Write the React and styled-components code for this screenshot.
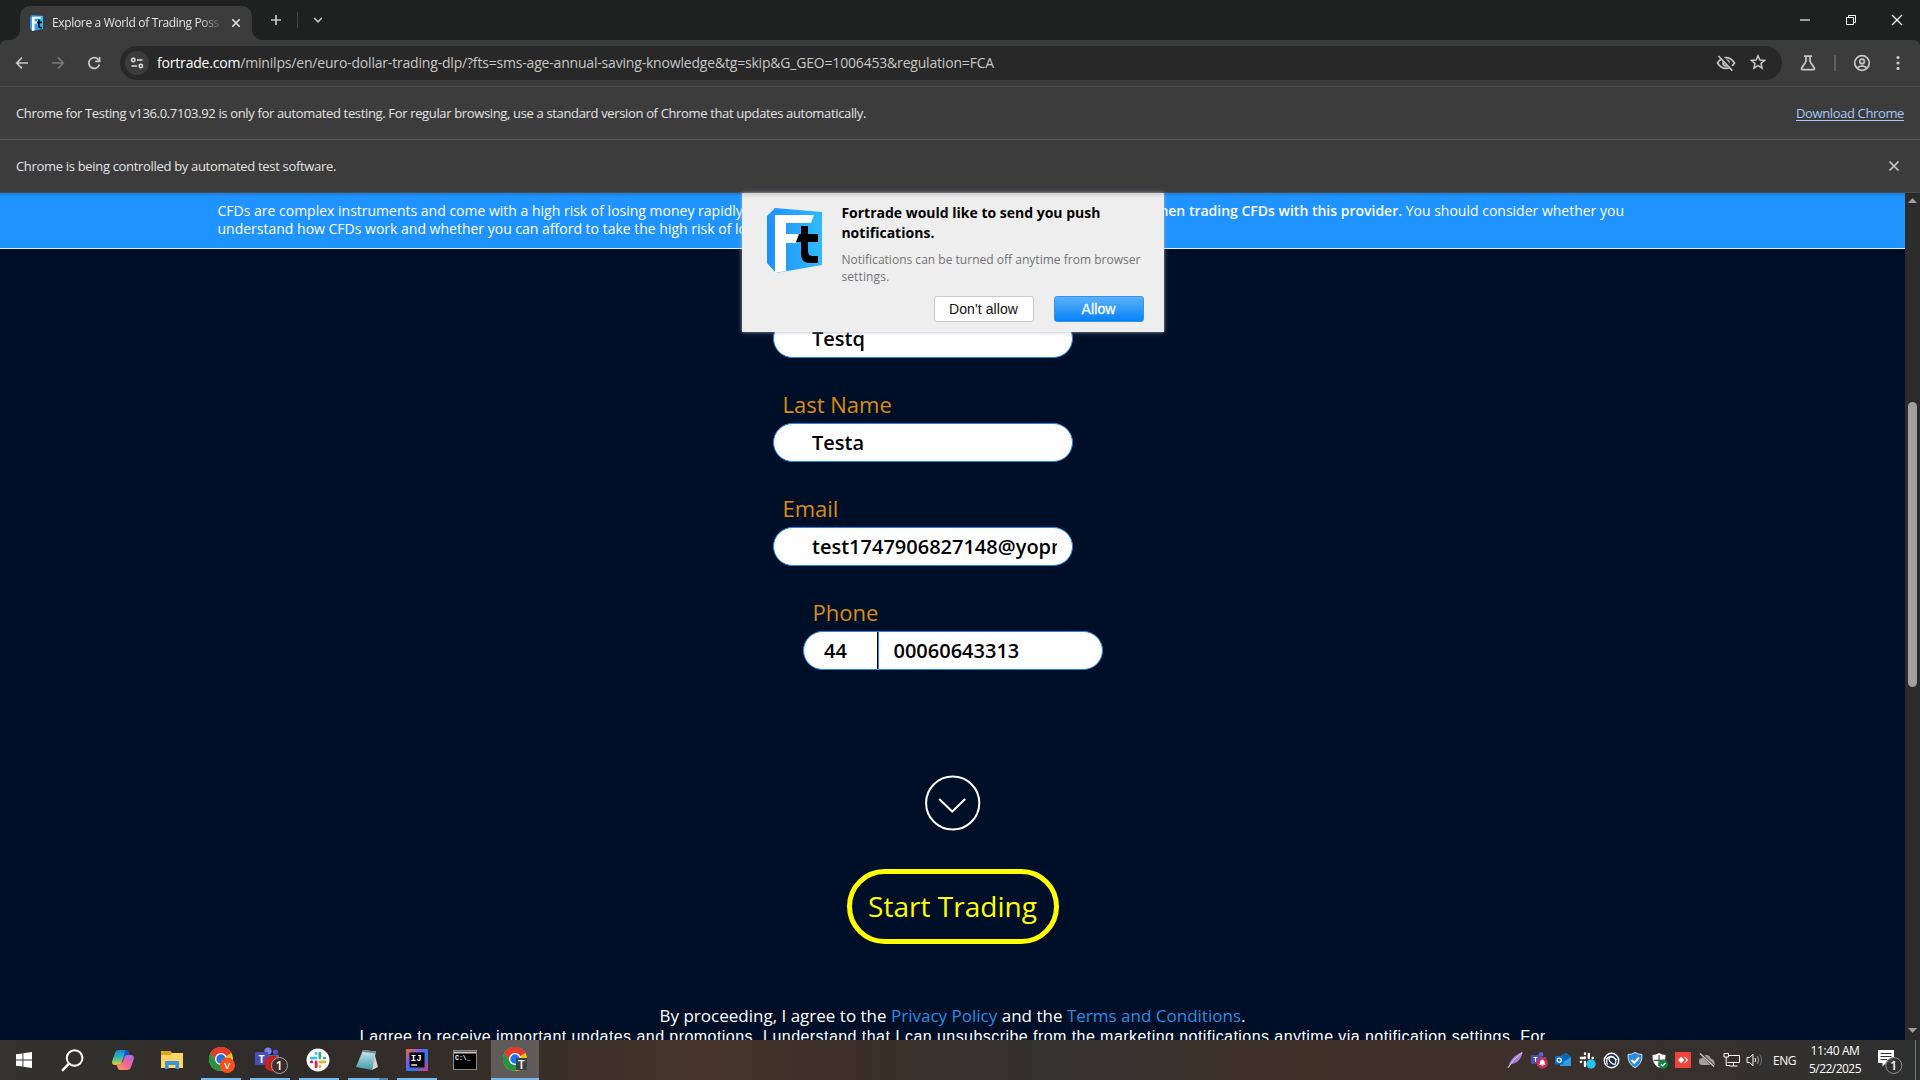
import React, { useLayoutEffect, useRef, useState } from "react";
import styled, { createGlobalStyle } from "styled-components";

const UI = `"Open Sans", "Noto Sans", sans-serif`;
const ARIAL = `"Liberation Sans", Arial, sans-serif`;

const Global = createGlobalStyle`
  *, *::before, *::after { box-sizing: border-box; }
  html, body { margin: 0; padding: 0; overflow: hidden; background: #000f28; }
  svg { display: block; flex: none; }
`;

/* ---------- text run tracked to a given measure ---------- */
const Run = styled.span`
  display: inline-block;
  white-space: pre;
  flex: none;
  text-decoration: inherit;
  text-underline-offset: inherit;
`;
function Tracked({ width, children }) {
  const ref = useRef(null);
  const [spacing, setSpacing] = useState(0);
  useLayoutEffect(() => {
    const el = ref.current;
    el.style.letterSpacing = "0px";
    const natural = el.getBoundingClientRect().width;
    setSpacing((width - natural) / el.textContent.length);
    el.style.letterSpacing = (width - natural) / el.textContent.length + "px";
  }, [width]);
  return <Run ref={ref} style={{ letterSpacing: spacing }}>{children}</Run>;
}

const Screen = styled.div`
  width: 1920px;
  height: 1080px;
  display: flex;
  flex-direction: column;
  overflow: hidden;
  font-family: ${UI};
`;

/* ---------- tab strip ---------- */
const TabStrip = styled.div`
  height: 40px;
  flex: none;
  display: flex;
  background: #1f2120;
  padding-left: 20px;
`;
const Tab = styled.div`
  position: relative;
  width: 232px;
  height: 34px;
  margin-top: 6px;
  padding: 0 10px;
  display: flex;
  align-items: center;
  background: #3c3c3c;
  border-radius: 10px 10px 0 0;
  color: #e3e3e3;
  font-size: 12px;
  &::before, &::after {
    content: "";
    position: absolute;
    bottom: 0;
    width: 10px;
    height: 10px;
  }
  &::before { left: -10px; background: radial-gradient(circle at 0 0, transparent 9.5px, #3c3c3c 10px); }
  &::after { right: -10px; background: radial-gradient(circle at 100% 0, transparent 9.5px, #3c3c3c 10px); }
`;
const TabTitle = styled.div`
  width: 168px;
  margin: 0 10px 0 9px;
  height: 18px;
  line-height: 17px;
  mask-image: linear-gradient(90deg, #000 147px, rgba(0, 0, 0, 0.15) 168px);
`;
const StripTools = styled.div`
  display: flex;
  align-items: center;
  padding-left: 18px;
  gap: 15px;
`;
const Divider = styled.span`
  width: ${(p) => p.$w || 1}px;
  height: ${(p) => p.$h || 16}px;
  margin-right: ${(p) => p.$right || 0}px;
  background: ${(p) => p.$c || "#474847"};
`;
const WindowButtons = styled.div`
  margin-left: auto;
  display: flex;
  align-items: center;
  gap: 30px;
  padding-right: 15px;
`;

/* ---------- toolbar ---------- */
const Toolbar = styled.div`
  height: 47px;
  flex: none;
  display: flex;
  align-items: center;
  background: #3c3c3c;
  border-bottom: 1px solid #4a4a4a;
  border-radius: 6px 6px 0 0;
  padding: 0 14px 0 13px;
`;
const ToolbarWrap = styled.div`
  background: #1f2120;
  flex: none;
`;
const NavButtons = styled.div`
  display: flex;
  gap: 18px;
  width: 107px;
`;
const Omnibox = styled.div`
  width: 1662px;
  height: 34px;
  border-radius: 17px;
  background: #282828;
  display: flex;
  align-items: center;
  padding: 0 16px 0 5px;
`;
const SiteChip = styled.span`
  width: 24px;
  height: 24px;
  border-radius: 50%;
  background: #3c3c3c;
  display: grid;
  place-items: center;
`;
const Url = styled.div`
  margin-left: 8px;
  flex: 1;
  font-size: 14px;
  line-height: 20px;
  color: #c7c7c7;
  b { color: #fff; font-weight: 400; }
`;
const OmniActions = styled.div`
  display: flex;
  gap: 14px;
`;
const ToolActions = styled.div`
  flex: 1;
  display: flex;
  align-items: center;
  gap: 17px;
  padding-left: 17px;
  svg:last-child { margin-left: 2px; }
`;

/* ---------- infobars ---------- */
const InfoBar = styled.div`
  height: 53px;
  flex: none;
  display: flex;
  align-items: center;
  justify-content: space-between;
  background: #3c3c3c;
  border-bottom: 1px solid ${(p) => p.$line};
  padding: 0 ${(p) => p.$right}px 0 16px;
  font-size: 13px;
  line-height: 18px;
  color: #e3e3e3;
`;
const BarLink = styled.a`
  color: #a8c7fa;
  text-decoration: underline;
  text-underline-offset: 2px;
`;

/* ---------- web page ---------- */
const Viewport = styled.div`
  position: relative;
  height: 847px;
  flex: none;
  display: flex;
`;
const Page = styled.div`
  width: 1905px;
  height: 847px;
  background: #000f28;
  overflow: hidden;
  display: flex;
  flex-direction: column;
`;
const RiskBanner = styled.div`
  height: 56px;
  flex: none;
  background: linear-gradient(#1a7cd8 0, #1e8ff8 3px, #1f93ff 6px);
  border-bottom: 1px solid #e8f3ff;
  padding: 9px 0 0 217.5px;
  color: #fff;
  font-size: 14px;
  line-height: 18px;
`;
const RiskLine = styled.div`
  width: 1406.5px;
  height: 18px;
  display: flex;
  justify-content: space-between;
  white-space: nowrap;
  b { font-weight: 600; }
`;
const Form = styled.div`
  width: 330px;
  margin: 5px 0 0 773px;
  display: flex;
  flex-direction: column;
  flex: none;
`;
const Field = styled.div`
  height: 104px;
  width: 300px;
  margin-left: ${(p) => (p.$shift ? 30 : 0)}px;
  padding-top: 27px;
`;
const Label = styled.label`
  display: block;
  padding-left: 9.5px;
  height: 38px;
  line-height: 38px;
  font-size: 22px;
  color: #db8c10;
`;
const Box = styled.div`
  height: 39px;
  border: 1px solid #1f87ea;
  border-radius: 20px;
  background: #fff;
  padding-left: ${(p) => (p.$split ? 20 : 38)}px;
  padding-right: 15px;
  display: flex;
  align-items: center;
  overflow: hidden;
  font-size: 20px;
  font-weight: 600;
  color: #000;
`;
const Value = styled.div`
  line-height: 36px;
  overflow: hidden;
  white-space: nowrap;
  width: ${(p) => (p.$w ? p.$w + "px" : "auto")};
`;
const BoxSplit = styled.span`
  width: 2px;
  height: 39px;
  margin-right: 14.5px;
  background: linear-gradient(90deg, #000 50%, #1f87ea 50%);
`;
const Centered = styled.div`
  display: flex;
  flex-direction: column;
  align-items: center;
  padding-top: 105px;
  color: #fff;
`;
const StartButton = styled.button`
  width: 212px;
  height: 75px;
  margin-top: 38px;
  padding: 0 0 2px;
  border: 5px solid #ffff00;
  border-radius: 38px;
  background: transparent;
  color: #ffff00;
  font-family: ${UI};
  font-size: 28px;
`;
const Consent = styled.p`
  margin: 61px 0 0;
  height: 22px;
  line-height: 22px;
  font-size: 17px;
  a { color: #2b8de0; }
`;
const Updates = styled.p`
  margin: 0;
  line-height: 20px;
  font-family: ${ARIAL};
  font-size: 16px;
`;

const Scrollbar = styled.div`
  width: 15px;
  background: #2b2b2b;
  display: flex;
  flex-direction: column;
  align-items: center;
  padding: 5px 0 7px;
`;
const Thumb = styled.span`
  width: 9px;
  height: 285px;
  margin: 199px 0 auto;
  border-radius: 5px;
  background: #9f9f9f;
`;

/* ---------- push dialog ---------- */
const PushDialog = styled.div`
  position: absolute;
  left: 742px;
  top: 0;
  width: 422px;
  height: 139px;
  background: linear-gradient(#d2d2d2 0, #eeeeee 5px);
  box-shadow: 0 0 4px rgba(160, 170, 190, 0.9);
  padding: 10px 20px 0 25px;
  display: grid;
  grid-template-columns: 74.4px 1fr;
  grid-template-rows: 93px 26px;
`;
const LogoCell = styled.div`
  padding-top: 5px;
`;
const PushTitle = styled.div`
  font-size: 14px;
  font-weight: 700;
  line-height: 20px;
  color: #000;
`;
const PushNote = styled.div`
  margin-top: 8px;
  font-size: 12px;
  line-height: 17px;
  color: #737373;
`;
const PushActions = styled.div`
  grid-column: 1 / 3;
  display: flex;
  justify-content: flex-end;
  gap: 20px;
`;
const PushButton = styled.button`
  width: ${(p) => (p.$primary ? 90 : 100)}px;
  height: 26px;
  padding: 0 1px 0 0;
  border-radius: 3px;
  border: 1px solid ${(p) => (p.$primary ? "#2f96f0" : "#c8c8c8")};
  background: ${(p) => (p.$primary ? "linear-gradient(#5cb0f8, #0682fa)" : "#fff")};
  color: ${(p) => (p.$primary ? "#fff" : "#111")};
  -webkit-text-stroke: ${(p) => (p.$primary ? "0.3px #fff" : "0")};
  font-family: ${ARIAL};
  font-size: 14px;
`;

/* ---------- taskbar ---------- */
const Taskbar = styled.div`
  height: 40px;
  flex: none;
  display: flex;
  background: linear-gradient(90deg, #33322f 0, #2f2b28 300px, #3a2f28 560px, #46342a 700px, #3b2f28 850px, #33322e 1050px, #3f3028 1300px, #3d302a 1500px, #33312f 1750px, #2e302f 1920px);
  color: #fff;
`;
const Slot = styled.div`
  width: ${(p) => p.$w || 48}px;
  padding-right: ${(p) => p.$trim || 0}px;
  display: grid;
  place-items: center;
`;
const AppSlot = styled.div`
  width: 49px;
  height: 40px;
  display: grid;
  place-items: center;
  grid-template-rows: 36px 2px;
  padding: 2px ${(p) => p.$trim || 0}px 0 0;
  background: ${(p) => (p.$active ? "linear-gradient(#5f5b59, #5f5b59) 0 0 / 48px 40px no-repeat" : "none")};
  &::after {
    content: "";
    justify-self: start;
    margin-left: ${(p) => (p.$active ? 0 : 4)}px;
    width: ${(p) => (p.$active ? 48 : 40)}px;
    height: 2px;
    background: ${(p) => (p.$idle ? "transparent" : p.$multi ? "linear-gradient(90deg, #76b9ed 31px, #5487ad 31px)" : "#76b9ed")};
  }
`;
const Tray = styled.div`
  margin-left: auto;
  display: flex;
  align-items: center;
`;
const TrayIcons = styled.div`
  display: grid;
  grid-template-columns: repeat(11, 24px);
  place-items: center;
`;
const Lang = styled.div`
  width: 35px;
  padding-left: 6px;
  font-size: 12px;
`;
const Clock = styled.div`
  width: 58px;
  margin-left: 4px;
  font-size: 12px;
  line-height: 18px;
  text-align: center;
`;
const Notice = styled.div`
  margin: 0 12px 0 13px;
  width: 26px;
`;

const LINE = { fill: "none", stroke: "#c7c7c7", strokeWidth: 1.7 };

function FtLogo({ w, h }) {
  return (
    <svg width={w} height={h} viewBox="0 0 55 65" preserveAspectRatio="none">
      <defs>
        <linearGradient id="ft" x1="0" x2="1">
          <stop offset="0" stopColor="#1f8fff" />
          <stop offset="1" stopColor="#31bbff" />
        </linearGradient>
      </defs>
      <path d="M8 0L55 4V57L9 65L0 55V8Z" fill="url(#ft)" />
      <path d="M8 7H47L44 15H19V26H33L29 35H19V63L8 65Z" fill="#fff" />
      <path d="M34 18H41V26H51V34H41V43Q41 48 45 48H51V55H43Q34 55 34 46V34H29L32 26H34Z" fill="#000" />
    </svg>
  );
}

function Chrome({ badge }) {
  return (
    <svg width="26" height="26" viewBox="0 0 26 26">
      <circle cx="12" cy="12" r="12" fill="#fbc116" />
      <path d="M12 12L1.6 6A12 12 0 0 1 22.4 6Z" fill="#e33b2e" />
      <path d="M12 6H22.4A12 12 0 0 0 1.6 6L6.8 15Z" fill="#e33b2e" />
      <path d="M6.8 15L1.6 6A12 12 0 0 0 12 24L17.2 15L12 18Z" fill="#229342" />
      <circle cx="12" cy="12" r="6" fill="#fff" />
      <circle cx="12" cy="12" r="4.7" fill="#1a73e8" />
      {badge === "V" && <circle cx="18.3" cy="18.3" r="7.7" fill="#f4511e" />}
      {badge === "T" && <rect x="13" y="11" width="11" height="12" fill="#3d4144" />}
      <text x="18.3" y={badge === "V" ? 22 : 21.5} fontFamily={UI} fontSize={badge === "V" ? 9.5 : 12} fontWeight="600" fill="#fff" textAnchor="middle">{badge}</text>
    </svg>
  );
}

function Teams() {
  return (
    <svg width="36" height="28" viewBox="0 0 36 28">
      <circle cx="16" cy="5" r="3.6" fill="#7b83eb" />
      <circle cx="23.5" cy="6" r="2.6" fill="#5059c9" />
      <path d="M12 9H27V16Q26 21 20 22Q12 21 12 15Z" fill="#5b62cf" />
      <rect x="3" y="6" width="13" height="13" rx="1.2" fill="#464eb8" />
      <text x="9.5" y="16.5" fontFamily={UI} fontSize="10.5" fontWeight="700" fill="#fff" textAnchor="middle">T</text>
      <circle cx="20.5" cy="17.5" r="8" fill="#c4221f" />
      <circle cx="27.5" cy="19.5" r="8" fill="#33302d" fillOpacity=".85" stroke="#a7a4a2" />
      <text x="27.3" y="24" fontFamily={UI} fontSize="12" fontWeight="600" fill="#fff" textAnchor="middle">1</text>
    </svg>
  );
}

function SlackMark() {
  return (
    <g strokeWidth="2.7" strokeLinecap="round" fill="none">
      <path d="M9.7 5V5.6M5 9.7H9.6" stroke="#36c5f0" />
      <path d="M13.3 5V9.6M17.6 9.7H18" stroke="#2eb67d" />
      <path d="M13.4 13.3H18M13.3 17.6V18" stroke="#ecb22e" />
      <path d="M9.7 13.4V18M5 13.3H5.6" stroke="#e01e5a" />
    </g>
  );
}

function BrowserChrome() {
  return (
    <>
      <TabStrip>
        <Tab>
          <FtLogo w={13} h={16} />
          <TabTitle><Tracked width={167}>Explore a World of Trading Poss</Tracked></TabTitle>
          <svg width="14" height="14" viewBox="0 0 14 14"><path d="M3.3 3.3L10.7 10.7M10.7 3.3L3.3 10.7" fill="none" stroke="#e3e3e3" strokeWidth="1.6" /></svg>
        </Tab>
        <StripTools>
          <svg width="12" height="12" viewBox="0 0 12 12"><path d="M6 1V11M1 6H11" {...LINE} /></svg>
          <Divider />
          <svg width="10" height="10" viewBox="0 0 10 10"><path d="M1.2 3L5 6.8L8.8 3" {...LINE} /></svg>
        </StripTools>
        <WindowButtons>
          <svg width="16" height="16" viewBox="0 0 16 16"><path d="M3 8H13" stroke="#a0a0a0" strokeWidth="2" /></svg>
          <svg width="16" height="16" viewBox="0 0 16 16"><path d="M3.5 5.5H10.5V12.5H3.5ZM5.5 5.5V3.5H12.5V10.5H10.5" fill="none" stroke="#fff" /></svg>
          <svg width="16" height="16" viewBox="0 0 16 16"><path d="M3 3L13 13M13 3L3 13" stroke="#fff" strokeWidth="1.2" /></svg>
        </WindowButtons>
      </TabStrip>
      <ToolbarWrap>
        <Toolbar>
          <NavButtons>
            <svg width="18" height="18" viewBox="0 0 18 18"><path d="M15 9H4M9 3.7L3.7 9L9 14.3" {...LINE} /></svg>
            <svg width="18" height="18" viewBox="0 0 18 18"><path d="M3 9H14M9 3.7L14.3 9L9 14.3" {...LINE} stroke="#777" /></svg>
            <svg width="18" height="18" viewBox="0 0 18 18"><path d="M14.4 10.5A5.4 5.4 0 1 1 13.2 5.4L14.5 6.9" {...LINE} /><path d="M14.6 3V7.3H10.2" {...LINE} /></svg>
          </NavButtons>
          <Omnibox>
            <SiteChip>
              <svg width="14" height="14" viewBox="0 0 14 14" fill="none" stroke="#e3e3e3" strokeWidth="1.5">
                <circle cx="3.3" cy="4" r="1.7" /><path d="M7 4H12.5" /><circle cx="10.8" cy="10" r="1.7" /><path d="M1.5 10H7" />
              </svg>
            </SiteChip>
            <Url><Tracked width={837}><b>fortrade.com</b>/minilps/en/euro-dollar-trading-dlp/?fts=sms-age-annual-saving-knowledge&amp;tg=skip&amp;G_GEO=1006453&amp;regulation=FCA</Tracked></Url>
            <OmniActions>
              <svg width="20" height="18" viewBox="0 0 20 18"><path d="M1.5 9Q5 3.6 10 3.6T18.5 9Q15 14.4 10 14.4T1.5 9Z" {...LINE} /><circle cx="10" cy="9" r="3" {...LINE} /><path d="M3.4 1L17 15.8" stroke="#282828" strokeWidth="4" /><path d="M2.5 2L16.3 16.6" {...LINE} /></svg>
              <svg width="16" height="16" viewBox="0 0 16 16"><path d="M8 1.7L9.9 6L14.6 6.4L11 9.5L12.1 14.1L8 11.6L3.9 14.1L5 9.5L1.4 6.4L6.1 6Z" {...LINE} strokeWidth="1.5" /></svg>
            </OmniActions>
          </Omnibox>
          <ToolActions>
            <svg width="18" height="18" viewBox="0 0 18 18"><path d="M5 2.2H13M7 2.2V7.5L2.6 14.2Q2.2 15.6 3.5 15.6H14.5Q15.8 15.6 15.4 14.2L11 7.5V2.2" {...LINE} /></svg>
            <Divider $w={2} $c="#5e5e5e" />
            <svg width="18" height="18" viewBox="0 0 18 18"><circle cx="9" cy="9" r="7.3" {...LINE} /><circle cx="9" cy="7.4" r="2.3" {...LINE} /><path d="M4 14.2Q9 9.7 14 14.2" {...LINE} /></svg>
            <svg width="16" height="16" viewBox="0 0 16 16" fill="#c7c7c7"><circle cx="8" cy="2.6" r="1.6" /><circle cx="8" cy="8" r="1.6" /><circle cx="8" cy="13.4" r="1.6" /></svg>
          </ToolActions>
        </Toolbar>
      </ToolbarWrap>
      <InfoBar $line="#5e5e5e" $right={16}>
        <Tracked width={850}>Chrome for Testing v136.0.7103.92 is only for automated testing. For regular browsing, use a standard version of Chrome that updates automatically.</Tracked>
        <BarLink><Tracked width={108}>Download Chrome</Tracked></BarLink>
      </InfoBar>
      <InfoBar $line="#4c4c4c" $right={19}>
        <Tracked width={320}>Chrome is being controlled by automated test software.</Tracked>
        <svg width="14" height="14" viewBox="0 0 14 14"><path d="M2.5 2.5L11.5 11.5M11.5 2.5L2.5 11.5" {...LINE} /></svg>
      </InfoBar>
    </>
  );
}

function WebPage() {
  return (
    <Viewport>
      <Page>
        <RiskBanner>
          <RiskLine>
            <span>CFDs are complex instruments and come with a high risk of losing money rapidly due to leverage.</span>
            <span><b>79% of retail investor accounts lose money when trading CFDs with this provider.</b> You should consider whether you</span>
          </RiskLine>
          <RiskLine>understand how CFDs work and whether you can afford to take the high risk of losing your money.</RiskLine>
        </RiskBanner>
        <Form>
          <Field><Label>First Name</Label><Box><Value>Testq</Value></Box></Field>
          <Field><Label>Last Name</Label><Box><Value>Testa</Value></Box></Field>
          <Field><Label>Email</Label><Box><Value $w={245}>test1747906827148@yopmail.com</Value></Box></Field>
          <Field $shift><Label>Phone</Label><Box $split><Value $w={53}>44</Value><BoxSplit /><Value>00060643313</Value></Box></Field>
        </Form>
        <Centered>
          <svg width="56" height="56" viewBox="0 0 56 56">
            <circle cx="27.7" cy="28" r="26.6" fill="none" stroke="#fff" strokeWidth="2" />
            <path d="M14.2 24L27.2 36.5L40.2 24" fill="none" stroke="#fff" strokeWidth="2" />
          </svg>
          <StartButton><Tracked width={169}>Start Trading</Tracked></StartButton>
          <Consent><Tracked width={586}>By proceeding, I agree to the <a>Privacy Policy</a> and the <a>Terms and Conditions</a>.</Tracked></Consent>
          <Updates><Tracked width={1186}>I agree to receive important updates and promotions. I understand that I can unsubscribe from the marketing notifications anytime via notification settings. For</Tracked></Updates>
        </Centered>
      </Page>
      <Scrollbar>
        <svg width="9" height="5" viewBox="0 0 9 5"><path d="M4.5 0L9 5H0Z" fill="#9f9f9f" /></svg>
        <Thumb />
        <svg width="9" height="5" viewBox="0 0 9 5"><path d="M4.5 5L9 0H0Z" fill="#9f9f9f" /></svg>
      </Scrollbar>
      <PushDialog>
        <LogoCell><FtLogo w={55} h={65} /></LogoCell>
        <div>
          <PushTitle><Tracked width={259}>Fortrade would like to send you push</Tracked><br /><Tracked width={93}>notifications.</Tracked></PushTitle>
          <PushNote><Tracked width={299}>Notifications can be turned off anytime from browser</Tracked><br /><Tracked width={48}>settings.</Tracked></PushNote>
        </div>
        <PushActions>
          <PushButton><Tracked width={69}>Don't allow</Tracked></PushButton>
          <PushButton $primary><Tracked width={34}>Allow</Tracked></PushButton>
        </PushActions>
      </PushDialog>
    </Viewport>
  );
}

function SystemBar() {
  return (
    <Taskbar>
      <Slot>
        <svg width="16" height="16" viewBox="0 0 16 16" fill="#fff"><path d="M0 2.3L6.5 1.4V7.6H0ZM7.4 1.2L16 0V7.6H7.4ZM0 8.4H6.5V14.6L0 13.7ZM7.4 8.4H16V16L7.4 14.8Z" /></svg>
      </Slot>
      <Slot>
        <svg width="23" height="23" viewBox="0 0 23 23" fill="none" stroke="#fff" strokeWidth="2"><circle cx="13.6" cy="9" r="7.8" /><path d="M8 14.7L1 21.8" strokeWidth="2.4" /></svg>
      </Slot>
      <Slot $w={53}>
        <svg width="22" height="20" viewBox="0 0 22 20">
          <defs>
            <linearGradient id="cpA" x1="0" y1="0" x2="0" y2="1"><stop offset="0" stopColor="#1684e0" /><stop offset=".5" stopColor="#32b9b0" /><stop offset="1" stopColor="#f2cf22" /></linearGradient>
            <linearGradient id="cpB" x1="1" y1="0" x2="0" y2="1"><stop offset="0" stopColor="#9d6bf0" /><stop offset=".5" stopColor="#f0659b" /><stop offset="1" stopColor="#ffa24a" /></linearGradient>
          </defs>
          <path d="M6 0H14Q16 0 17 4L18 6H14Q12 6 11 9L9 14Q8 15 5 15H3Q-1 15 .5 10L3 3Q4 0 6 0Z" fill="url(#cpA)" />
          <path d="M13 0H14.5Q16.3 0 17 4L18 6H14L11.5 8Z" fill="#1454c4" />
          <path d="M16 20H8Q6 20 5 16L4 14H8Q10 14 11 11L13 6Q14 5 17 5H19Q23 5 21.5 10L19 17Q18 20 16 20Z" fill="url(#cpB)" />
        </svg>
      </Slot>
      <Slot $trim={2}>
        <svg width="22" height="20" viewBox="0 0 22 20"><path d="M0 1H9L11 3H22V18H0Z" fill="#ffd567" /><path d="M0 1H9L10.5 3.5L9 5H0Z" fill="#e0a419" /><path d="M4 19V12Q4 11 5 11H17Q18 11 18 12V19H14.5V15H7.5V19Z" fill="#3a94d8" /></svg>
      </Slot>
      <AppSlot><Chrome badge="V" /></AppSlot>
      <AppSlot $trim={1}><Teams /></AppSlot>
      <AppSlot $trim={3}>
        <svg width="24" height="24" viewBox="0 0 23 23"><circle cx="11.5" cy="11.5" r="11" fill="#fff" /><SlackMark /></svg>
      </AppSlot>
      <AppSlot $multi $trim={3}>
        <svg width="24" height="24" viewBox="0 0 24 24">
          <defs><linearGradient id="np" x1="0" y1="0" x2="0" y2="1"><stop offset="0" stopColor="#cfeaf0" /><stop offset="1" stopColor="#3f9aab" /></linearGradient></defs>
          <path d="M19 4L23 19L17 22Z" fill="#d7d4cb" /><path d="M8 2L21 3.5L17 22L1 19Z" fill="url(#np)" /><path d="M8 2L21 3.5L20.6 5.4L7.3 3.8Z" fill="#74878b" />
        </svg>
      </AppSlot>
      <AppSlot $trim={1}>
        <svg width="22" height="22" viewBox="0 0 22 22">
          <defs><linearGradient id="ij" x1="0" y1="0" x2="1" y2="1"><stop offset="0" stopColor="#f36b2b" /><stop offset=".35" stopColor="#7a5cf0" /><stop offset=".6" stopColor="#1f7df0" /><stop offset="1" stopColor="#e8357f" /></linearGradient></defs>
          <rect width="22" height="22" rx="1" fill="url(#ij)" /><rect x="3.5" y="3.5" width="15" height="15" fill="#000" />
          <text x="4.8" y="12" fontFamily="'Liberation Mono', monospace" fontWeight="700" fontSize="9" fill="#fff">IJ</text><path d="M5.3 16H11" stroke="#fff" strokeWidth="1.4" />
        </svg>
      </AppSlot>
      <AppSlot $idle $trim={3}>
        <svg width="24" height="20" viewBox="0 0 24 20"><rect x=".5" y=".5" width="23" height="19" fill="#000" stroke="#8b8b8b" /><path d="M1 2.5H23" stroke="#c9c9c9" strokeWidth="2" /><text x="2" y="10" fontFamily="'Liberation Mono', monospace" fontWeight="700" fontSize="6.5" fill="#fff">C:\_</text></svg>
      </AppSlot>
      <AppSlot $active><Chrome badge="T" /></AppSlot>

      <Tray>
        <TrayIcons>
          <svg width="16" height="16" viewBox="0 0 16 16"><path d="M1 16L3 10Q7 3 15.5 0Q15 6 10 10Q7 12 4 12Z" fill="#a77bd6" /><path d="M1 16Q5 8 15 .5" stroke="#e2c8f5" fill="none" /></svg>
          <svg width="18" height="18" viewBox="0 0 18 18"><circle cx="11" cy="3.5" r="2.4" fill="#5a61d0" /><path d="M7 6H16V12L12 15H7Z" fill="#5059c9" /><rect x="1" y="4" width="9" height="9" rx="1" fill="#464eb8" /><path d="M3.5 6.5H7.5M5.5 6.5V11" stroke="#fff" strokeWidth="1.2" /><circle cx="12.3" cy="12" r="5.7" fill="#c4314b" /><path d="M9.5 13.5Q10.3 13 10.3 11Q10.5 9 12.3 9T14.3 11Q14.3 13 15.1 13.5ZM11.3 14.5H13.3" fill="#fff" stroke="#fff" strokeWidth=".6" /></svg>
          <svg width="16" height="16" viewBox="0 0 16 16"><path d="M6 4L11 1L16 5V14H5V4Z" fill="#28a8ea" /><path d="M6 3L11 1L16 5L10 9H6Z" fill="#1163b0" /><path d="M7 14L16 6V14Z" fill="#2f9be0" /><rect y="4" width="8.5" height="8.5" fill="#0a6fc9" /><circle cx="4.2" cy="8.2" r="2" fill="none" stroke="#fff" strokeWidth="1.3" /></svg>
          <svg width="17" height="17" viewBox="0 0 17 17"><path d="M6 1.5V2M6 5.5V6M1.8 6H6M9.8 1.8V6M13.6 6H14M1.8 9.8H2.2M6 9.8V14M9.8 9.8H14" stroke="#fff" strokeWidth="2.3" strokeLinecap="round" /><circle cx="12" cy="12" r="4.7" fill="#21c5e8" /></svg>
          <svg width="17" height="17" viewBox="0 0 17 17"><circle cx="8.5" cy="8.5" r="7.2" fill="#1c2c4e" stroke="#fff" strokeWidth="1.4" /><path d="M4.5 12.5Q2 6 7 4.5Q10.5 4 12.5 7.5Q13.5 10.5 12 12.5Q7 11.5 6 7.5Q6 5 8.5 4.3M3 7Q7 1.8 13.8 8" stroke="#fff" fill="none" strokeWidth="1.2" /></svg>
          <svg width="16" height="16" viewBox="0 0 16 16"><path d="M8 .5Q11 2.5 15 2.5Q15.5 12 8 15.7Q.5 12 1 2.5Q5 2.5 8 .5Z" fill="#2c8be0" stroke="#c5e2fa" /><path d="M4.5 8L7.3 10.8L12 5.5" fill="none" stroke="#fff" strokeWidth="2" /></svg>
          <svg width="17" height="17" viewBox="0 0 17 17"><path d="M8 1Q11 3 14.5 3Q15 12 8 15.7Q1 12 1.5 3Q5 3 8 1Z" fill="#fff" /><path d="M8 3V14M3 8.3H13.5" stroke="#2f2c2a" strokeWidth="1" /><circle cx="12.2" cy="12.2" r="4.6" fill="#10893e" /><path d="M10 12.3L11.6 13.9L14.5 11" fill="none" stroke="#fff" strokeWidth="1.2" /></svg>
          <svg width="16" height="16" viewBox="0 0 16 16"><rect width="16" height="16" fill="#ef443b" /><path d="M6.2 4.8L9.4 8L6.2 11.2L3 8Z" fill="#fff" /><path d="M9 4.9L10 4.8L13.2 8L10 11.2L9 11.1L11.8 8Z" fill="#fff" /></svg>
          <svg width="18" height="16" viewBox="0 0 18 16"><path d="M4 13Q1 13 1 9.5T4 6.3Q5.5 2.6 9 3Q12 3.4 12.8 6.7Q17 7 16.8 13Z" fill="#a3a09e" /><path d="M2 1L16 14.5" stroke="#3b322e" strokeWidth="2.6" /><path d="M2 1.5L16 14.5" stroke="#d8d5d3" strokeWidth="1.2" /></svg>
          <svg width="17" height="16" viewBox="0 0 17 16" fill="none" stroke="#fff"><path d="M6 3.5H16.5V10.5H4.5M10.5 10.5V14M6.5 14H14.5" /><path d="M1 1.5H5.5V5H1ZM3.2 5V13.5H7" /></svg>
          <svg width="18" height="16" viewBox="0 0 18 16" fill="none" stroke="#fff"><path d="M1 5.5H3.5L7 2.2V13.8L3.5 10.5H1Z" /><path d="M9 6Q10.4 8 9 10" /><path d="M11.3 4.2Q14 8 11.3 11.8" stroke="#aaa" /><path d="M13.6 2.5Q17.7 8 13.6 13.5" stroke="#777" /></svg>
        </TrayIcons>
        <Lang><Tracked width={23}>ENG</Tracked></Lang>
        <Clock><Tracked width={49}>11:40 AM</Tracked><Tracked width={52}>5/22/2025</Tracked></Clock>
        <Notice>
          <svg width="26" height="28" viewBox="0 0 26 28"><path d="M1 4H17V17H9L5.5 20.5V17H1Z" fill="#fff" /><path d="M3.5 7.5H14.5M3.5 10.5H14.5M3.5 13.5H10" stroke="#33312f" /><circle cx="16.8" cy="19.5" r="8" fill="#31312f" fillOpacity=".92" stroke="#8f8f8f" /><text x="16.8" y="24" fontFamily={UI} fontSize="12" fontWeight="600" fill="#fff" textAnchor="middle">1</text></svg>
        </Notice>
        <Divider $h={40} $c="#777775" $right={4} />
      </Tray>
    </Taskbar>
  );
}

export default function App() {
  return (
    <Screen>
      <Global />
      <BrowserChrome />
      <WebPage />
      <SystemBar />
    </Screen>
  );
}
